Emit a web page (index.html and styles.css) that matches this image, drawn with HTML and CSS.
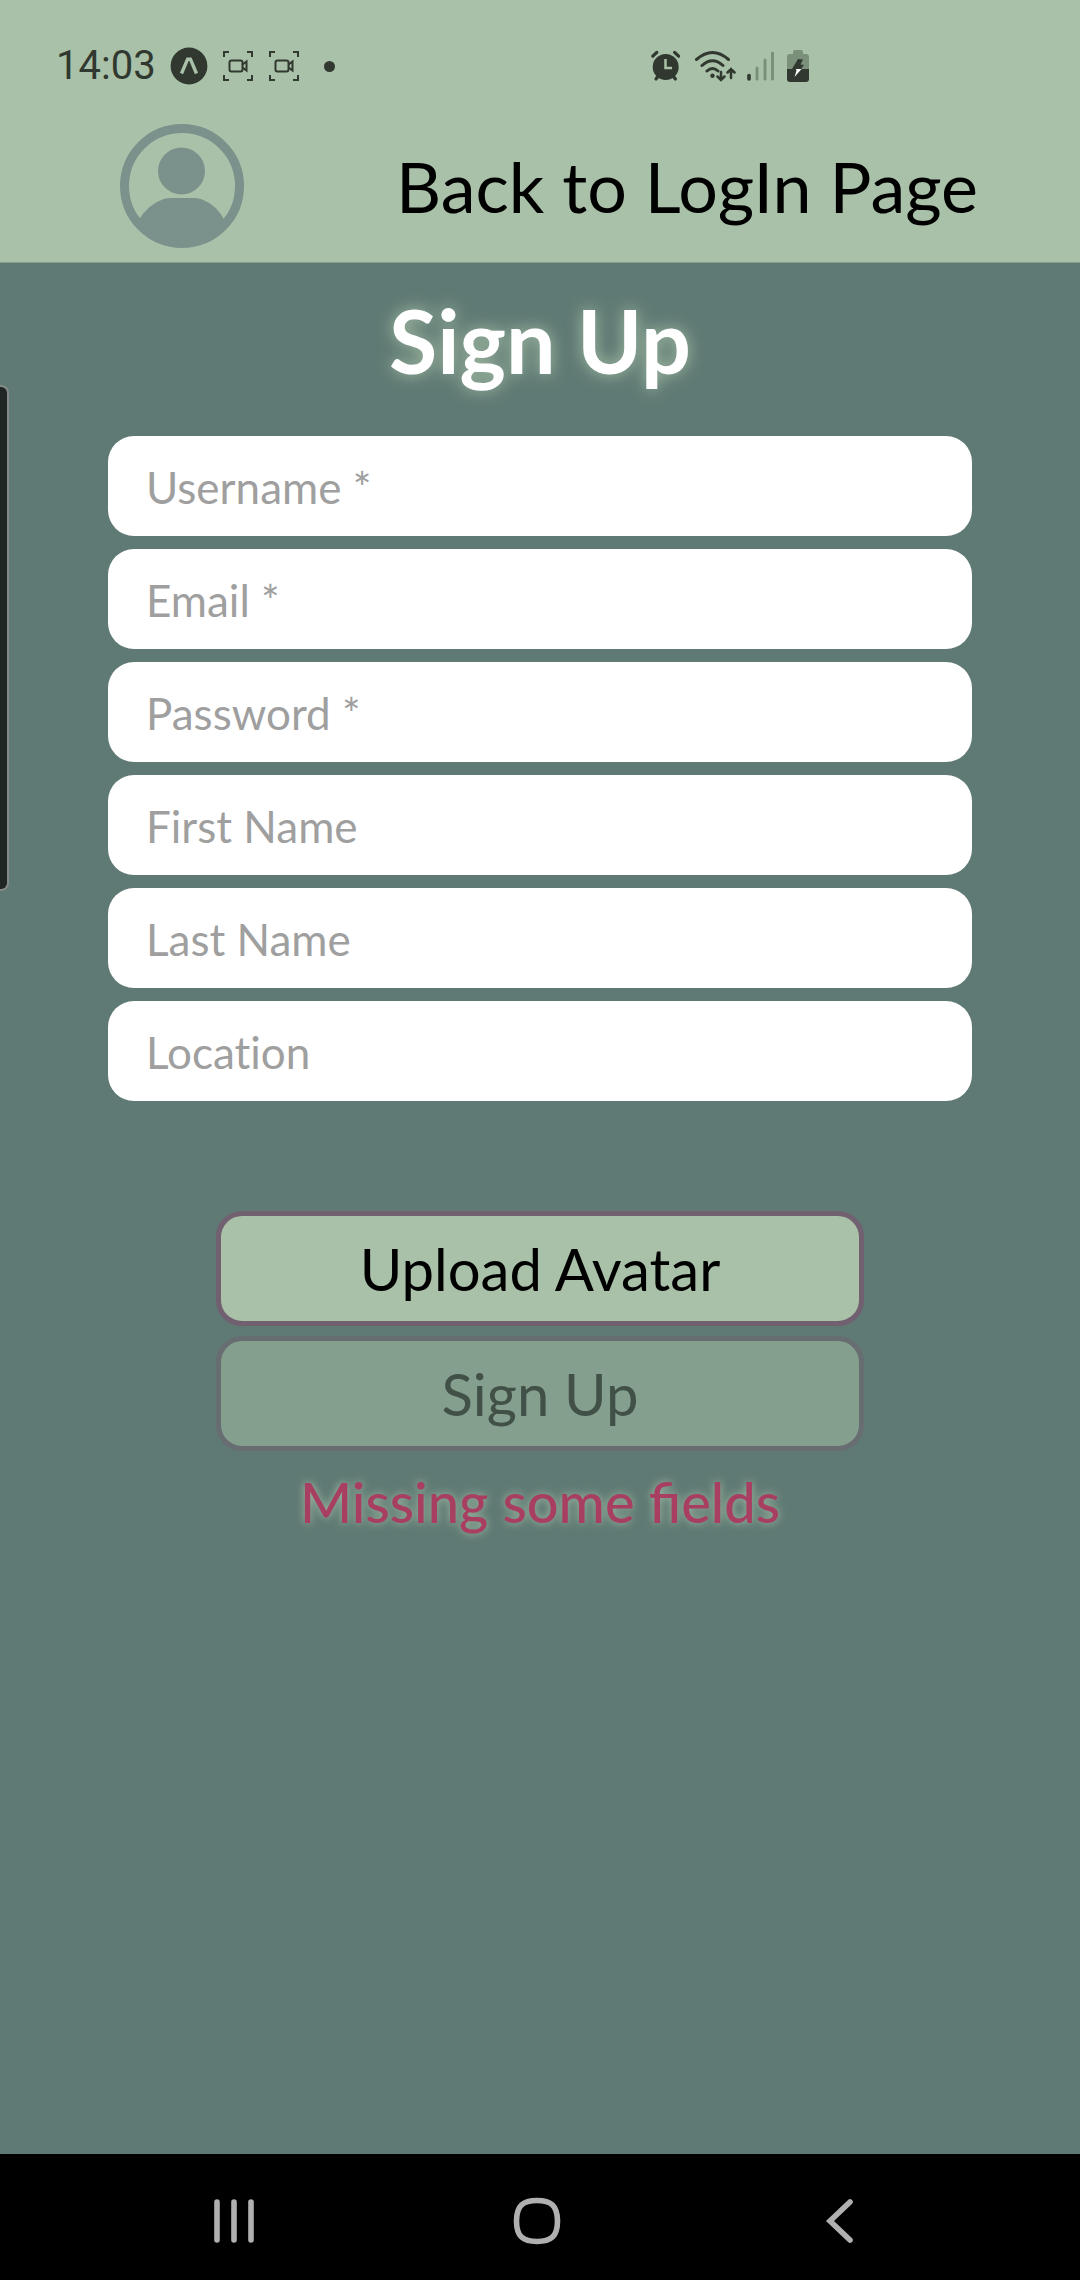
FILE: index.html
```html
<!DOCTYPE html>
<html lang="en">
<head>
<meta charset="utf-8">
<meta name="viewport" content="width=device-width, initial-scale=1">
<title>Sign Up</title>
<link rel="stylesheet" href="styles.css">
</head>
<body>
<div class="app">
  <header class="top">
    <div class="status">
      <span class="clock">14:03</span>
      <svg width="38" height="38" viewBox="0 0 38 38"><circle cx="19" cy="19" r="18.4" fill="#30382f"/><path d="M11.5 26.5 17.6 12.2h2.8L26.5 26.5" fill="none" stroke="#a9c1a8" stroke-width="3.4"/></svg>
      <svg width="32" height="32" viewBox="0 0 32 32" fill="none" stroke="#30382f" stroke-width="2"><path d="M2 7V2h5M25 2h5v5M30 25v5h-5M7 30H2v-5"/><rect x="7.500" y="10.500" width="13" height="11" rx="2"/><path d="m20.500 14.500 4-3v9l-4-3"/></svg>
      <svg width="32" height="32" viewBox="0 0 32 32" fill="none" stroke="#30382f" stroke-width="2"><path d="M2 7V2h5M25 2h5v5M30 25v5h-5M7 30H2v-5"/><rect x="7.500" y="10.500" width="13" height="11" rx="2"/><path d="m20.500 14.500 4-3v9l-4-3"/></svg>
      <span class="dot"></span>
      <div class="signals">
        <svg width="32" height="32" viewBox="0 0 32 32" fill="none" stroke="#30382f" stroke-width="3.200" stroke-linecap="round"><circle cx="15.700" cy="17" r="13" fill="#30382f" stroke="none"/><path d="m2.800 6.200 4-3.800M28.600 6.200l-4-3.800M6 29l3-4M25.400 29l-3-4"/><path d="M15.500 9v9h6.500" stroke="#a9c1a8" stroke-width="2.500" stroke-linecap="butt"/></svg>
        <svg width="44" height="32" viewBox="0 0 44 32" fill="none" stroke="#30382f" stroke-width="3" stroke-linecap="round"><path d="M4.500 9.500q16-14 32 0M10 15.500q10.500-9.500 21 0M15 21q5.500-5 11 0"/><circle cx="20.500" cy="25.800" r="2.200" fill="#30382f" stroke="none"/><path d="M29 22v8M25.500 26.500 29 30l3.500-3.500M39 28v-9M35.500 22.500 39 19l3.500 3.500" stroke-width="2.500"/></svg>
        <svg width="30" height="32" viewBox="0 0 30 32" fill="none" stroke-width="3.600" stroke-linecap="round"><path d="M3 25.500V29" stroke="#30382f"/><path d="M11 18v11M19 10v19M26.500 3v26" stroke="#7b907a" stroke-width="3"/></svg>
        <svg width="24" height="34" viewBox="0 0 24 34"><path d="M7 5V3q0-2 2-2h6q2 0 2 2v2h3q3 0 3 3v12H1V8q0-3 3-3z" fill="#7b907a"/><path d="M1 20h22v10q0 3-3 3H4q-3 0-3-3z" fill="#30382f"/><path d="m12 10 5 .5-2.500 5 3.500.5-3 4H6z" fill="#30382f"/><path d="m10 20h5.500l-7 8 2-6.500z" fill="#fff"/></svg>
      </div>
    </div>
    <nav class="bar">
      <svg width="124" height="124" viewBox="0 0 124 124"><circle cx="62" cy="62" r="57.500" fill="none" stroke="#7b918b" stroke-width="9"/><circle cx="61.500" cy="47" r="23.500" fill="#7b918b"/><path d="M18 97Q28 80 45 74.500q3-.5 6-.5h22q5 0 8 1Q97 81 105 97A57 57 0 0 1 18 97z" fill="#7b918b"/></svg>
      <a class="back" href="#login">Back to LogIn Page</a>
    </nav>
  </header>
  <main class="main">
    <h1 class="title">Sign Up</h1>
    <form class="form">
      <div class="fields">
        <input class="field" type="text" placeholder="Username *" aria-label="Username">
        <input class="field" type="email" placeholder="Email *" aria-label="Email">
        <input class="field" type="password" placeholder="Password *" aria-label="Password">
        <input class="field" type="text" placeholder="First Name" aria-label="First name">
        <input class="field" type="text" placeholder="Last Name" aria-label="Last name">
        <input class="field" type="text" placeholder="Location" aria-label="Location">
      </div>
      <div class="actions">
        <button class="button" type="button">Upload Avatar</button>
        <button class="button" type="submit" disabled>Sign Up</button>
      </div>
      <p class="error" role="alert">Missing some fields</p>
    </form>
  </main>
  <footer class="keys">
    <button class="key" aria-label="Recent apps"><svg width="48" height="56" viewBox="0 0 48 56" fill="none" stroke="#b0b0b0" stroke-width="5.600" stroke-linecap="round"><path d="M7 9v38M24 9v38M41 9v38"/></svg></button>
    <button class="key" aria-label="Home"><svg width="48" height="56" viewBox="0 0 48 56" fill="none" stroke="#b0b0b0" stroke-width="5.600"><path d="M24 7.500c14 0 20.500 5 20.500 20.500S38 48.500 24 48.500 3.500 43.500 3.500 28 10 7.500 24 7.500z"/></svg></button>
    <button class="key" aria-label="Back"><svg width="48" height="56" viewBox="0 0 48 56" fill="none" stroke="#b0b0b0" stroke-width="5.600" stroke-linecap="round"><path d="M34 9 14 28l20 19"/></svg></button>
  </footer>
  <div class="edge"></div>
</div>
</body>
</html>
```
FILE: styles.css
```css
* {
  box-sizing: border-box;
}

body {
  margin: 0;
  font-family: Lato, "Liberation Sans", sans-serif;
  color: #000;
  background: #5f7a74;
}

.app {
  position: relative;
  display: flex;
  flex-direction: column;
  min-height: 100vh;
}

.top {
  background: #a9c1a8;
  border-bottom: 1px solid #86a08c;
}

.status {
  display: flex;
  align-items: center;
  gap: 14px;
  padding: 46px 25% 24px 56px;
  color: #30382f;
}

.clock {
  font: 40px/40px Roboto, sans-serif;
}

.dot {
  width: 11px;
  height: 11px;
  margin-left: 10px;
  border-radius: 50%;
  background: #30382f;
}

.signals {
  display: flex;
  align-items: center;
  gap: 10px;
  margin-left: auto;
}

.bar {
  display: flex;
  align-items: center;
  justify-content: space-between;
  padding: 14px 102px 14px 120px;
}

.back {
  font-size: 70px;
  line-height: 80px;
  color: #000;
  text-decoration: none;
}

.main {
  flex: 1;
}

.title {
  margin: 22px 0 41px;
  font-size: 88px;
  line-height: 110px;
  text-align: center;
  color: #fff;
  text-shadow: 0 0 16px #a9c1a8;
}

.fields {
  display: flex;
  flex-direction: column;
  gap: 13px;
  width: 80%;
  margin: 0 auto;
}

.field {
  width: 100%;
  height: 100px;
  padding: 2px 38px 0;
  border: 0;
  border-radius: 26px;
  background: #fff;
  font-family: inherit;
  font-size: 44px;
  font-variant-ligatures: none;
}

.field::placeholder {
  color: #9f9f9f;
  opacity: 1;
}

.actions {
  display: flex;
  flex-direction: column;
  gap: 10px;
  width: 60%;
  margin: 110px auto 0;
}

.button {
  height: 115px;
  padding: 0;
  border: 5px solid #706070;
  border-radius: 26px;
  background: #a9c1a8;
  font-family: inherit;
  font-size: 58px;
  line-height: 80px;
  color: #000;
}

.button:disabled {
  border-color: #686d72;
  background: #849f8e;
  color: #425147;
}

.error {
  margin: 16px 0;
  font-size: 56px;
  line-height: 70px;
  text-align: center;
  font-weight: 500;
  color: #a83e61;
  text-shadow: 0 0 8px #a9c1a8;
}

.keys {
  display: flex;
  justify-content: space-between;
  padding: 0 20% 0 210px;
  background: #000;
}

.key {
  display: flex;
  align-items: center;
  height: 126px;
  padding: 8px 0 0;
  border: 0;
  background: none;
}

.edge {
  position: absolute;
  top: 385px;
  left: 0;
  width: 9px;
  height: 506px;
  border: 2px solid #858a88;
  border-left: 0;
  border-radius: 0 8px 8px 0;
  background: #1f2624;
}
```
